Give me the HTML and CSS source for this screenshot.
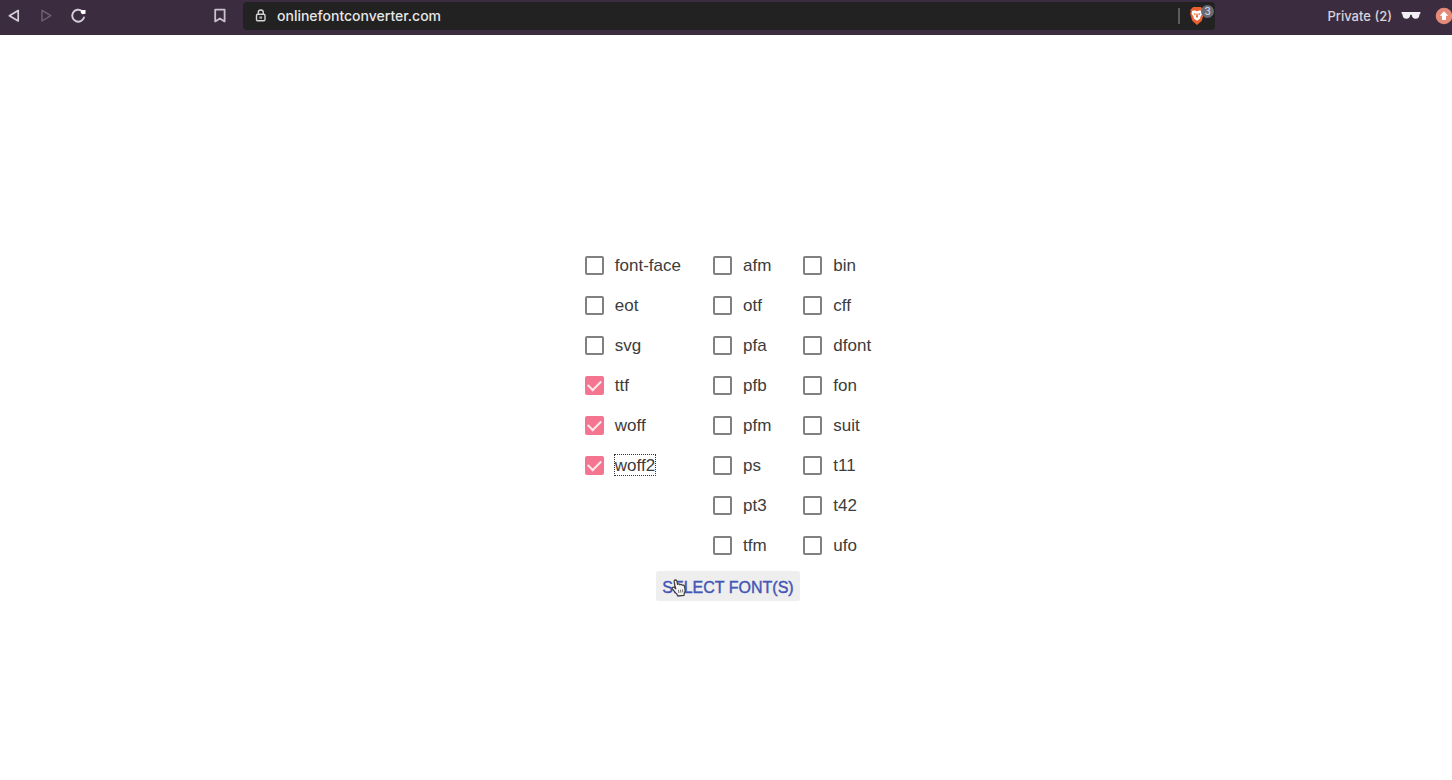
FILE: index.html
```html
<!DOCTYPE html>
<html lang="en">
<head>
<meta charset="utf-8">
<title>Online Font Converter</title>
<link rel="stylesheet" href="styles.css">
</head>
<body>
<header class="toolbar">
  <nav class="nav">
    <button class="icon-btn" type="button" aria-label="Back"><svg width="16" height="16" viewBox="0 0 16 16"><path d="M12.2 2.4v10.6L3.400 7.700z" fill="none" stroke="#d5cfd9" stroke-width="1.7" stroke-linejoin="round"/></svg></button>
    <button class="icon-btn" type="button" aria-label="Forward"><svg width="16" height="16" viewBox="0 0 16 16"><path d="M4 2.400v10.600l8.800-5.300z" fill="none" stroke="#6f6376" stroke-width="1.4" stroke-linejoin="round"/></svg></button>
    <button class="icon-btn" type="button" aria-label="Reload"><svg width="16" height="16" viewBox="0 0 16 16"><path d="M14 9.500A6 6 0 1 1 12 3" fill="none" stroke="#d5cfd9" stroke-width="1.900" stroke-linecap="round"/><path d="M10.800 1.900h4.700v3.900l-3.400.4-1.300-1.700z" fill="#fff"/></svg></button>
    <button class="icon-btn bookmark" type="button" aria-label="Bookmark"><svg width="16" height="16" viewBox="0 0 16 16"><path d="M3.200 1.700h9.400v11.700L7.900 10.400l-4.700 3z" fill="none" stroke="#c9c2cd" stroke-width="1.800" stroke-linejoin="round"/></svg></button>
  </nav>
  <div class="address">
    <svg class="lock" width="12" height="14" viewBox="0 0 12 14"><g fill="none" stroke="#d4d4d4" stroke-width="1.4"><rect x="1.500" y="5.300" width="8.500" height="6.500" rx="1.2"/><path d="M3.300 5.300V3.500a2.500 2.500 0 0 1 5 0v1.800"/></g><rect x="4.400" y="7.400" width="2.700" height="2.300" fill="#aaa"/></svg>
    <input class="url" type="text" value="onlinefontconverter.com" aria-label="Address">
    <span class="divider"></span>
    <button class="shield" type="button" aria-label="Shields, 3 blocked">
      <svg width="16" height="20" viewBox="0 0 16 20"><path d="M4.200 1h7.600l1.600 1.500 1.300 1.400-.4 2.200.5 1.700-2 7L8 19l-4.800-4.200-2-7 .5-1.700-.4-2.200 1.300-1.400z" fill="#e8612f"/><path d="M3.200 4.800 6 4.500l2 .8 2-.8 2.800.3.600 2.600-2.200 3.800.2 1.200L8 14.800l-3.400-2.400.2-1.200-2.200-3.800z" fill="#fff"/><path d="m4.500 7 2.100.7-.5 2zM11.500 7l-2.100.7.500 2zM7.500 7.500h1L9 11l-1 .7-1-.7z" fill="#e8612f"/></svg>
      <span class="badge">3</span>
    </button>
  </div>
  <div class="profile">
    <span class="private">Private (2)</span>
    <svg class="glasses" width="20" height="10" viewBox="0 0 20 10"><path d="M.6 1h18.800v1.600l-.8.600c-.2 3-1.600 4.600-4 4.600-2.300 0-3.600-1.600-3.900-4.100H9.300C9 6.200 7.700 7.800 5.400 7.800c-2.400 0-3.800-1.600-4-4.600l-.8-.6z" fill="#f3f0f5"/></svg>
    <button class="update" type="button" aria-label="Update"><svg width="18" height="18" viewBox="0 0 18 18"><circle cx="9" cy="9" r="8.300" fill="#e58a78"/><path d="M9 4.200 13.300 8.700H11V13H7V8.700H4.700z" fill="#fff"/></svg></button>
  </div>
</header>
<main class="page">
  <form class="converter">
    <div class="formats">
      <div class="column">
        <label class="option"><input type="checkbox"><span>font-face</span></label>
        <label class="option"><input type="checkbox"><span>eot</span></label>
        <label class="option"><input type="checkbox"><span>svg</span></label>
        <label class="option"><input type="checkbox" checked><span>ttf</span></label>
        <label class="option"><input type="checkbox" checked><span>woff</span></label>
        <label class="option"><input type="checkbox" checked><span class="focused">woff2</span></label>
      </div>
      <div class="column">
        <label class="option"><input type="checkbox"><span>afm</span></label>
        <label class="option"><input type="checkbox"><span>otf</span></label>
        <label class="option"><input type="checkbox"><span>pfa</span></label>
        <label class="option"><input type="checkbox"><span>pfb</span></label>
        <label class="option"><input type="checkbox"><span>pfm</span></label>
        <label class="option"><input type="checkbox"><span>ps</span></label>
        <label class="option"><input type="checkbox"><span>pt3</span></label>
        <label class="option"><input type="checkbox"><span>tfm</span></label>
      </div>
      <div class="column">
        <label class="option"><input type="checkbox"><span>bin</span></label>
        <label class="option"><input type="checkbox"><span>cff</span></label>
        <label class="option"><input type="checkbox"><span>dfont</span></label>
        <label class="option"><input type="checkbox"><span>fon</span></label>
        <label class="option"><input type="checkbox"><span>suit</span></label>
        <label class="option"><input type="checkbox"><span>t11</span></label>
        <label class="option"><input type="checkbox"><span>t42</span></label>
        <label class="option"><input type="checkbox"><span>ufo</span></label>
      </div>
    </div>
    <div class="action">
      <button class="select" type="button">SELECT FONT(S)</button>
      <svg class="pointer" width="16" height="18" viewBox="0 0 16 18"><path d="M4 7.500 3.200 2.600C3 .7 5.500.4 5.900 2.200l.7 3.200c.6-.7 1.900-.6 2.300.3.600-.6 1.900-.4 2.300.5.900-.4 2 .1 2.200 1l.6 3.200c.3 1.600 0 2.700-.7 3.700l-.3 2.200-6.200.7-.9-1.900C4.300 13.600 3.200 11.900 1.500 10.200.5 9 1.900 7.500 3.300 8.500l1.500 1.200z" fill="#f4f4f4" stroke="#444" stroke-width="1.300" stroke-linejoin="round"/><path d="m7.400 10.800.5 3.200M9.400 10.600l.5 3.100M11.400 10.300l.4 3" stroke="#777" stroke-width="1" fill="none"/></svg>
    </div>
  </form>
</main>
</body>
</html>
```

FILE: styles.css
```css
* { box-sizing: border-box; }
body {
  margin: 0;
  background: #fff;
  color: #3c3c3c;
  font-family: "Liberation Sans", Arial, sans-serif;
  font-size: 17px;
}
button { border: 0; padding: 0; background: none; }
svg { display: block; }

.toolbar {
  display: flex;
  height: 35px;
  padding: 2px 0 5px;
  background: #3b2d3f;
  font-family: Inter, sans-serif;
  font-size: 13px;
}
.nav {
  display: flex;
  align-items: center;
  gap: 16px;
  width: 243px;
  padding: 0 15px 0 6px;
}
.bookmark { margin-left: auto; }
.address {
  display: flex;
  align-items: center;
  flex: 1;
  min-width: 0;
  padding: 0 1px 0 12px;
  border-radius: 4px;
  background: #222;
}
.lock { flex: none; }
.url {
  flex: 1;
  min-width: 0;
  padding: 0 0 2px;
  margin-left: 10px;
  border: 0;
  outline: 0;
  background: transparent;
  color: #e6e6e6;
  font: 500 14px Inter, sans-serif;
}
.divider { width: 2px; height: 16px; background: #5c5c5c; }
.shield { position: relative; margin: 0 9px 0 9px; }
.badge {
  position: absolute;
  top: -1px;
  right: -9px;
  width: 13px;
  height: 13px;
  border-radius: 50%;
  background: #686a76;
  color: #e0e0e6;
  font: 10px/13px Inter, sans-serif;
  text-align: center;
}
.profile {
  display: flex;
  align-items: center;
  justify-content: flex-end;
  width: 237px;
  overflow: hidden;
  color: #d9d3dc;
}
.private { font-weight: 500; white-space: nowrap; }
.glasses { flex: none; margin: 0 14px 0 9px; }
.update { flex: none; margin-right: -1px; }

.page {
  display: flex;
  justify-content: center;
  padding: 210px 0 40px 4px;
}
.converter {
  display: flex;
  flex-direction: column;
  align-items: center;
  gap: 6px;
}
.formats { display: flex; gap: 32px; }
.option {
  display: flex;
  align-items: center;
  gap: 11px;
  height: 40px;
}
.option span { line-height: 18px; padding-top: 2px; }
.option .focused { outline: 1px dotted #333; }
.option input {
  appearance: none;
  width: 19px;
  height: 19px;
  margin: 0;
  border: 2px solid #808080;
  border-radius: 2px;
  background: #fff;
}
.option input:checked {
  display: grid;
  place-items: center;
  border-color: #f4758f;
  background: #f4758f;
}
.option input:checked::before {
  content: "";
  width: 11px;
  height: 6px;
  margin-bottom: 3px;
  border: solid #ffe9ee;
  border-width: 0 0 2px 2px;
  transform: rotate(-45deg);
}
.action { position: relative; }
.select {
  height: 30px;
  padding: 3px 6px 0;
  border-radius: 2px;
  background: #eee;
  color: #4355b5;
  font: 16px "Liberation Sans", Arial, sans-serif;
  -webkit-text-stroke: 0.4px #4355b5;
}
.pointer { position: absolute; top: 8px; left: 15px; }
```
